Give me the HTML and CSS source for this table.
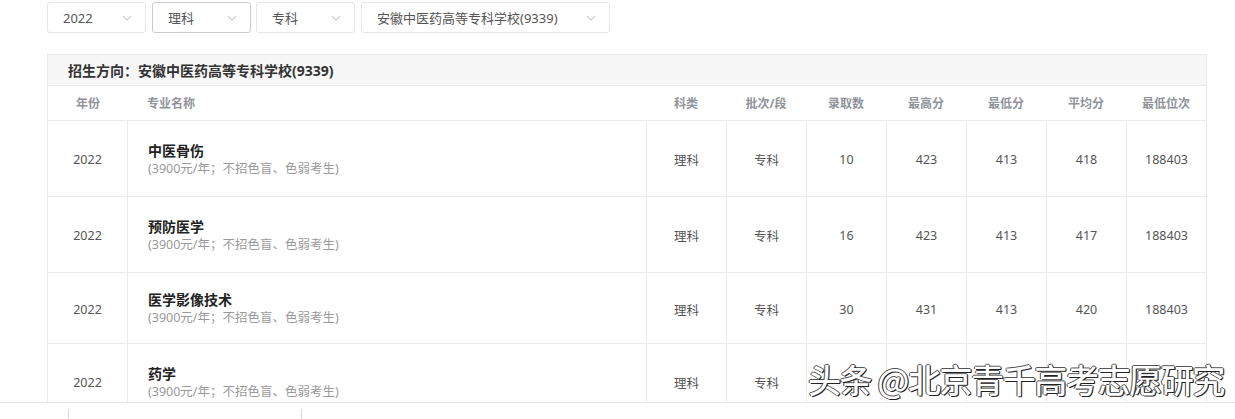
FILE: index.html
```html
<!DOCTYPE html>
<html lang="zh-CN">
<head>
<meta charset="utf-8">
<link rel="stylesheet" href="styles.css">
</head>
<body>
<div class="page">
  <div class="filters">
    <div class="select w1"><span>2022</span><svg class="chev" viewBox="0 0 10 6"><path d="M1 1l4 4 4-4"/></svg></div>
    <div class="select w1 hover"><span>理科</span><svg class="chev" viewBox="0 0 10 6"><path d="M1 1l4 4 4-4"/></svg></div>
    <div class="select w1"><span>专科</span><svg class="chev" viewBox="0 0 10 6"><path d="M1 1l4 4 4-4"/></svg></div>
    <div class="select w2"><span>安徽中医药高等专科学校(9339)</span><svg class="chev" viewBox="0 0 10 6"><path d="M1 1l4 4 4-4"/></svg></div>
  </div>

  <div class="table">
    <div class="title">招生方向：安徽中医药高等专科学校(9339)</div>
    <div class="row head">
      <div class="c c-year">年份</div>
      <div class="c c-name">专业名称</div>
      <div class="c">科类</div>
      <div class="c">批次/段</div>
      <div class="c">录取数</div>
      <div class="c">最高分</div>
      <div class="c">最低分</div>
      <div class="c">平均分</div>
      <div class="c">最低位次</div>
    </div>
    <div class="row body h76">
      <div class="c c-year">2022</div>
      <div class="c c-name"><b>中医骨伤</b><small>(3900元/年；不招色盲、色弱考生)</small></div>
      <div class="c">理科</div><div class="c">专科</div><div class="c">10</div><div class="c">423</div><div class="c">413</div><div class="c">418</div><div class="c">188403</div>
    </div>
    <div class="row body h76">
      <div class="c c-year">2022</div>
      <div class="c c-name"><b>预防医学</b><small>(3900元/年；不招色盲、色弱考生)</small></div>
      <div class="c">理科</div><div class="c">专科</div><div class="c">16</div><div class="c">423</div><div class="c">413</div><div class="c">417</div><div class="c">188403</div>
    </div>
    <div class="row body h71">
      <div class="c c-year">2022</div>
      <div class="c c-name"><b>医学影像技术</b><small>(3900元/年；不招色盲、色弱考生)</small></div>
      <div class="c">理科</div><div class="c">专科</div><div class="c">30</div><div class="c">431</div><div class="c">413</div><div class="c">420</div><div class="c">188403</div>
    </div>
    <div class="row body h76">
      <div class="c c-year">2022</div>
      <div class="c c-name"><b>药学</b><small>(3900元/年；不招色盲、色弱考生)</small></div>
      <div class="c">理科</div><div class="c">专科</div><div class="c"></div><div class="c"></div><div class="c"></div><div class="c"></div><div class="c"></div>
    </div>
  </div>
</div>

<div class="watermark">头条 @北京青千高考志愿研究</div>

<div class="bottombar">
  <span class="divider d1"></span>
  <span class="divider d2"></span>
</div>
</body>
</html>
```

FILE: styles.css
```css
html, body {
  margin: 0;
  padding: 0;
  background: #fff;
  overflow: hidden;
}
body {
  width: 1235px;
  height: 419px;
  position: relative;
  font-family: "Noto Sans", "Noto Sans CJK SC", sans-serif;
  color: #606266;
}
.page {
  padding: 2px 0 0 47px;
}
.filters {
  display: flex;
  gap: 6px;
}
.select {
  box-sizing: border-box;
  height: 31px;
  border: 1px solid #e4e6eb;
  border-radius: 3px;
  display: flex;
  align-items: center;
  justify-content: space-between;
  padding: 0 13px 0 15px;
  font-size: 13px;
  color: #555;
  background: #fff;
}
.select.hover { border-color: #c8cbd0; }
.w1 { width: 99px; }
.select.w1:nth-child(3) { margin-left: -1px; }
.w2 { width: 249px; }
.chev {
  width: 10px;
  height: 6px;
  fill: none;
  stroke: #c9ccd2;
  stroke-width: 1.1;
}

.table {
  margin-top: 21px;
  width: 1160px;
  border: 1px solid #ebebeb;
  border-bottom: none;
  box-sizing: border-box;
}
.title {
  height: 30px;
  background: #f7f7f7;
  border-bottom: 1px solid #ebebeb;
  padding-left: 20px;
  display: flex;
  align-items: center;
  font-size: 14px;
  font-weight: bold;
  color: #333;
}
.row {
  display: grid;
  grid-template-columns: 79px 519px repeat(7, 80px);
  border-bottom: 1px solid #ebebeb;
}
.row .c {
  display: flex;
  align-items: center;
  justify-content: center;
  font-size: 12.5px;
}
.head {
  height: 34px;
}
.head .c {
  font-size: 12px;
  font-weight: bold;
  color: #909399;
}
.head .c-year { padding-left: 1px; }
.head .c-name,
.body .c-name {
  justify-content: flex-start;
  padding-left: 20px;
}
.body .c {
  border-left: 1px solid #ebebeb;
  color: #555;
  padding-top: 2px;
}
.body .c:first-child { border-left: none; }
.body .c-name {
  flex-direction: column;
  align-items: flex-start;
  justify-content: center;
}
.c-name b {
  font-size: 14px;
  color: #222;
  line-height: 18px;
}
.c-name small {
  font-size: 12.5px;
  color: #9a9a9a;
  line-height: 18px;
}
.h76 { height: 75px; }
.h71 { height: 70px; }

.watermark {
  position: absolute;
  left: 808px;
  top: 357px;
  font-family: "Noto Sans CJK SC", sans-serif;
  font-size: 33px;
  font-weight: 500;
  line-height: 44px;
  color: #fff;
  letter-spacing: -1.4px;
  text-shadow: 1px 1px 0 #222, -1px 0 0 #444, 0 -1px 0 #555, 1px 0 0 #222;
  white-space: nowrap;
}

.bottombar {
  position: absolute;
  left: 0;
  top: 402px;
  width: 1235px;
  height: 17px;
  background: #fff;
  border-top: 1px solid #e4e4e4;
  box-sizing: border-box;
}
.divider {
  position: absolute;
  top: 6px;
  bottom: 0;
  width: 1px;
  background: #d9d9d9;
}
.d1 { left: 68px; }
.d2 { left: 301px; }
```
